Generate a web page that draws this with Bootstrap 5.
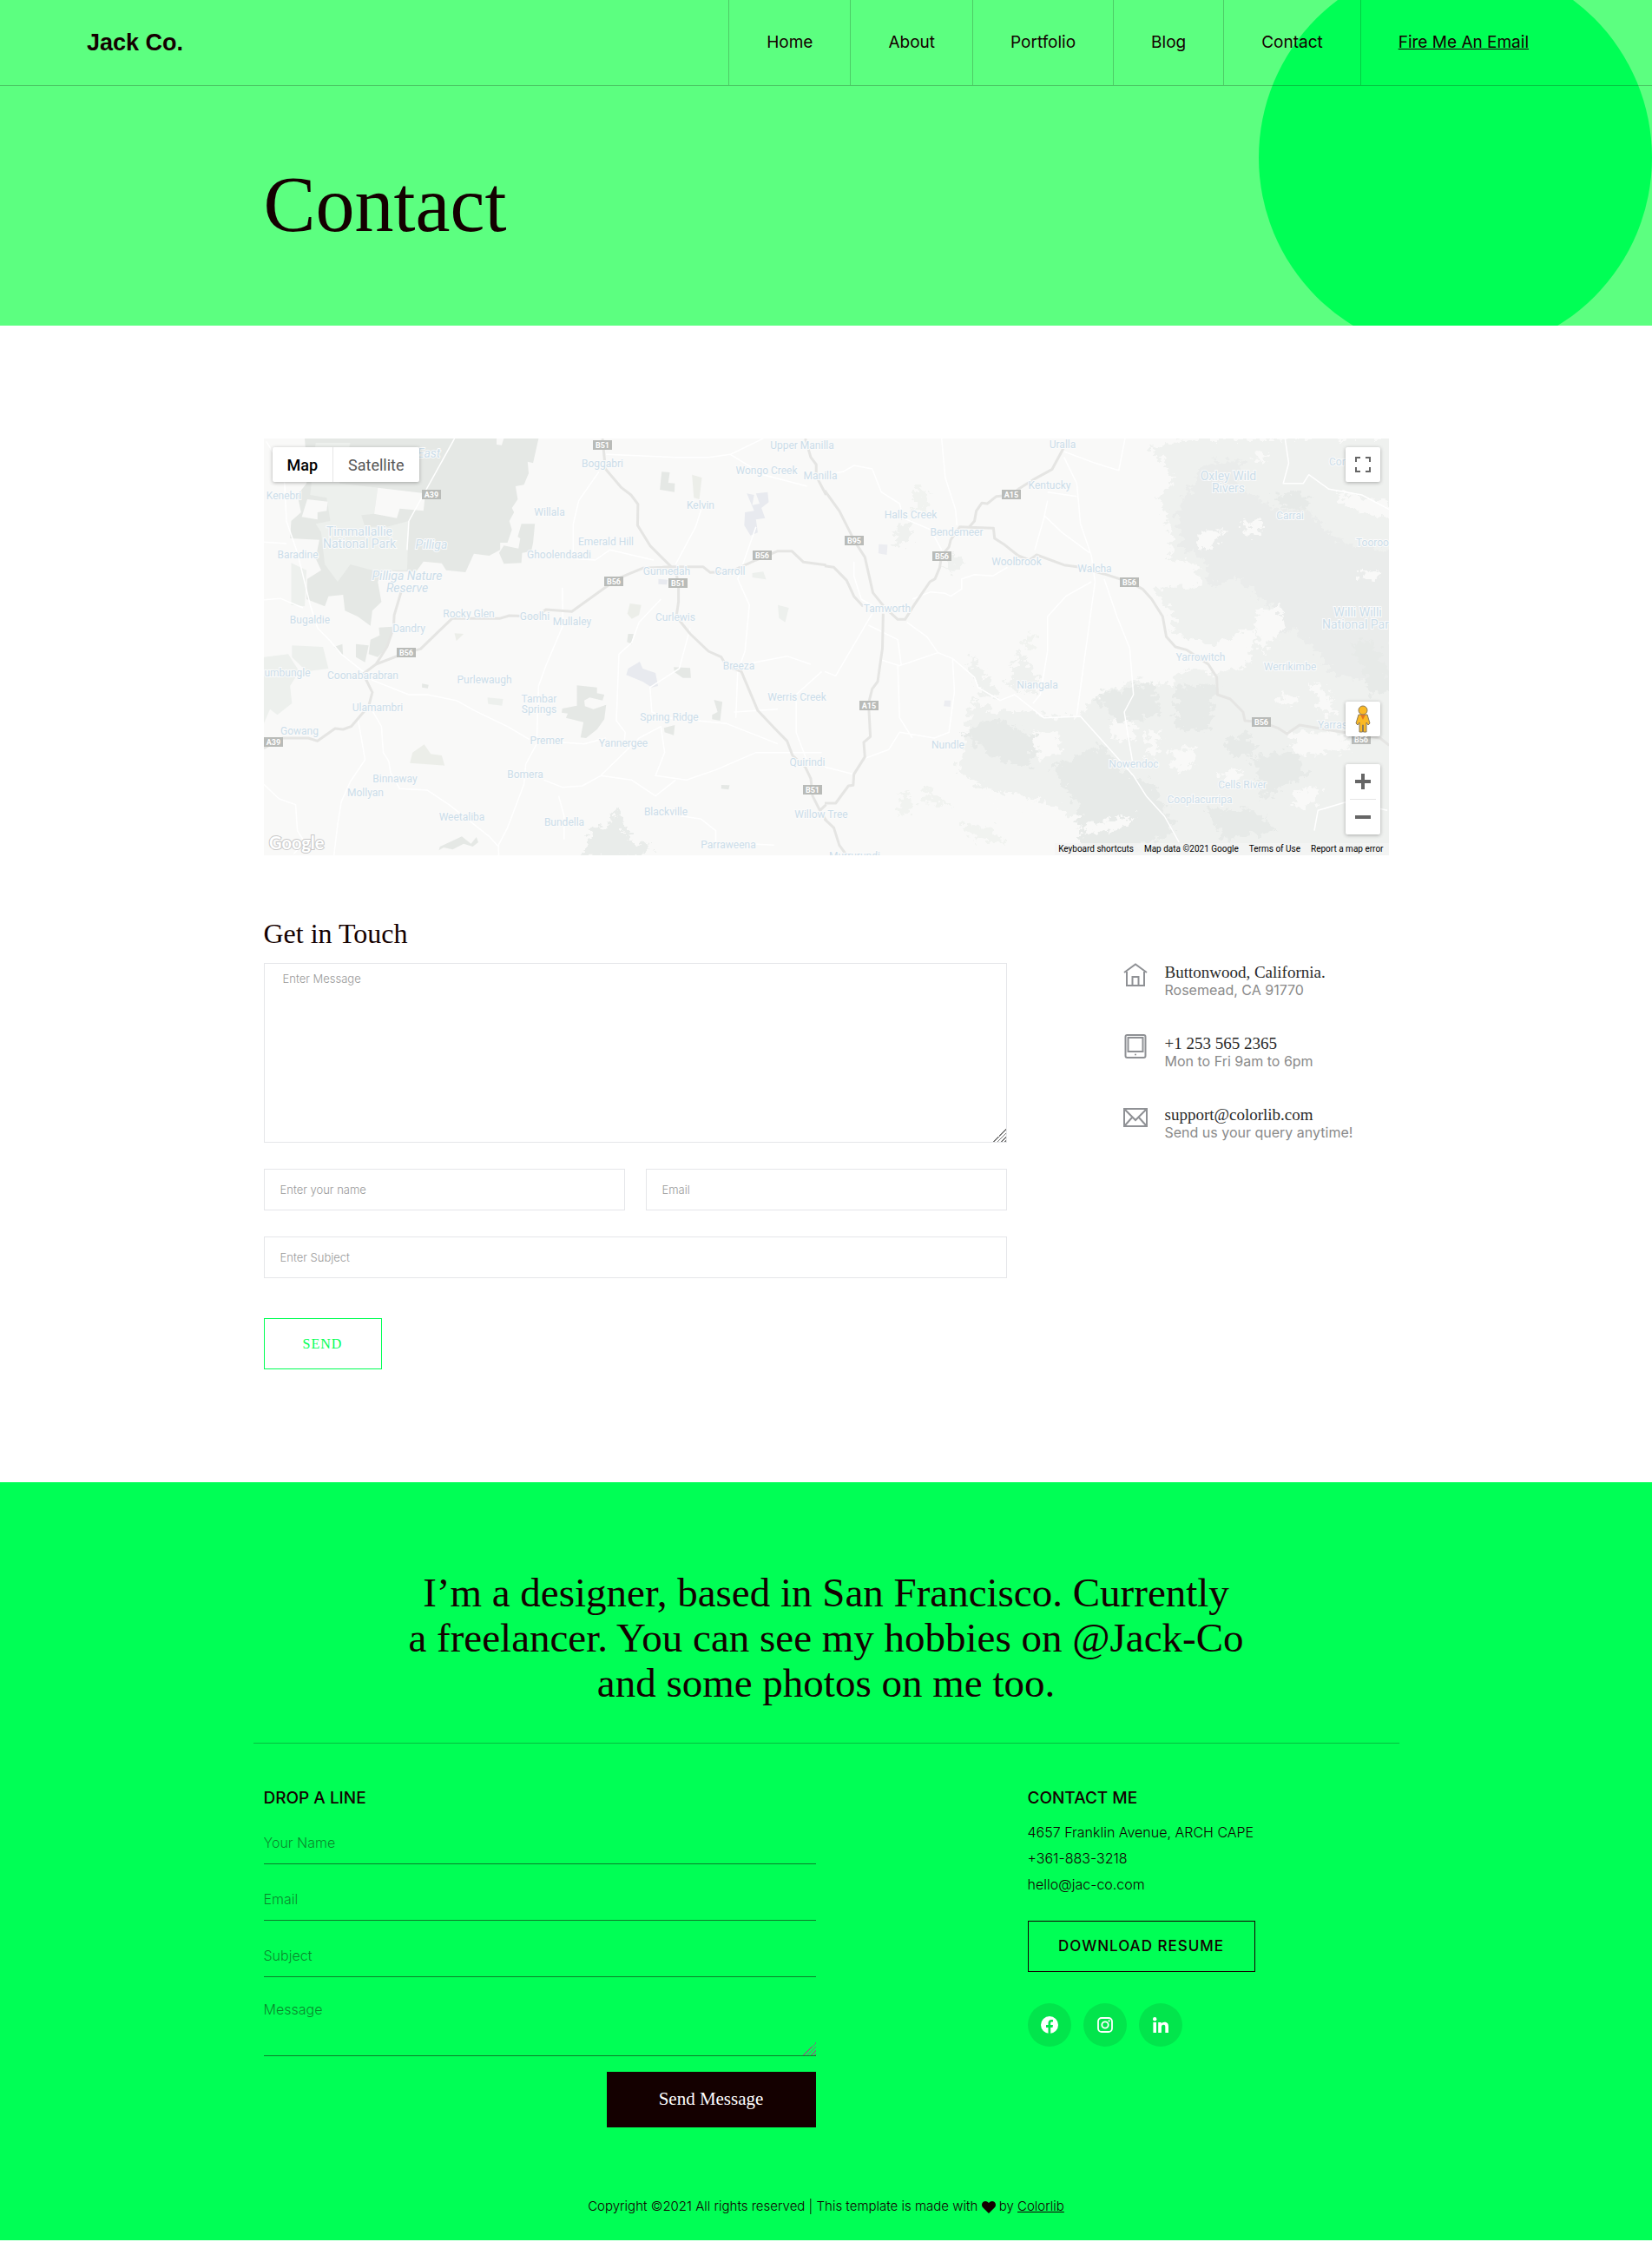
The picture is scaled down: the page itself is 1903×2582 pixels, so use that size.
<!DOCTYPE html>
<html lang="en">
<head>
<meta charset="utf-8">
<meta name="viewport" content="width=device-width, initial-scale=1">
<title>Contact | Jack Co.</title>
<link rel="stylesheet" href="https://cdn.jsdelivr.net/npm/bootstrap@5.3.0/dist/css/bootstrap.min.css">
<style>
  :root { --ink: #140000; --green: #00ff55; --green-soft: #5cff80; --serif: "Liberation Serif", serif; --sans: Inter, "Liberation Sans", sans-serif; }
  body { font-family: var(--sans); font-size: 16px; color: var(--ink); background: #fff; }
  a { color: var(--ink); }
  .hero { background: var(--green-soft); min-height: 375px; isolation: isolate; }
  .hero-disc { position: absolute; z-index: -1; top: -45px; right: 0; width: 453px; height: 453px; border-radius: 50%; background: var(--green); }
  .site-header { border-bottom: 1px solid rgba(20,0,0,.22); padding: 0 100px; }
  .site-header .brand { font-size: 27px; font-weight: 700; font-family: "Liberation Sans", sans-serif; line-height: 98px; }
  .site-nav a { display: block; padding: 0 43px; font-size: 19px; line-height: 98px; border-left: 1px solid rgba(20,0,0,.2); text-decoration: none; }
  .site-nav li:last-child a { padding-right: 0; text-decoration: underline; margin-right: 42px; }
  .hero h1 { font-family: var(--serif); font-size: 90px; line-height: 108px; padding-top: 83px; margin: 0; }
  .contact-section { padding: 130px 0; }

  .map-box { height: 480px; background: #f9f9f8; overflow: hidden; margin-bottom: 72px; font-family: Roboto, sans-serif; }
  .map-box > svg { width: 100%; height: 100%; display: block; }
  .map-roads path { fill: none; vector-effect: non-scaling-stroke; stroke-linejoin: round; }
  .road-main { stroke: #e5e5e3; stroke-width: 3; }
  .road-minor { stroke: #fff; stroke-width: 1.5; }
  .map-labels { font-family: Roboto, sans-serif; font-size: 12px; fill: #cbdde9; text-anchor: middle; }
  .map-labels text { paint-order: stroke; stroke: #fbfbfb; stroke-width: 2px; }
  .map-labels .park { font-size: 14px; }
  .map-labels .from { text-anchor: start; }
  .map-shields rect { fill: #b9bbb8; }
  .map-shields text { font: 700 9px Roboto, sans-serif; fill: #fff; text-anchor: middle; }
  .map-ctl { position: absolute; background: #fff; border-radius: 2px; box-shadow: 0 1px 4px rgba(0,0,0,.3); }
  .map-ctl button { border: 0; background: none; padding: 0; height: 40px; color: #565656; font-size: 18px; display: block; }
  .map-types { top: 10px; left: 10px; }
  .map-types button { padding: 0 17px; }
  .map-types button:first-child { color: #000; font-weight: 500; border-right: 1px solid #e6e6e6; }
  .map-side { right: 10px; width: 40px; }
  .map-side button { width: 40px; }
  .map-side svg { display: block; margin: auto; }
  .map-full { top: 10px; }
  .map-man { top: 303px; }
  .map-zoom { bottom: 24px; }
  .map-zoom hr { margin: 0 5px; border-color: #999; }
  .map-terms { position: absolute; right: 0; bottom: 0; background: rgba(245,245,245,.7); font-size: 10px; line-height: 14px; padding: 0 6px 0 4px; gap: 12px; }
  .map-terms, .map-terms a { color: #000; text-decoration: none; }

  .form-title { font-family: var(--serif); font-size: 32px; line-height: 36px; margin-bottom: 16px; }
  .message-form .form-control { border: 1px solid #e5e6e9; border-radius: 0; font-size: 13px; padding: 0 18px; height: 48px; font-weight: 300; }
  .message-form textarea.form-control { height: 207px; padding: 8px 21px; display: block; }
  .message-form .form-control::placeholder { color: #999; }
  .message-form .field-gap { margin-top: 30px; }
  textarea::-webkit-resizer { background: linear-gradient(135deg, transparent 50%, #777 50% 56%, transparent 56% 64%, #777 64% 70%, transparent 70% 78%, #777 78% 84%, transparent 84% 92%, #777 92%); }
  .btn-send { width: 136px; height: 59px; border: 1px solid var(--green); color: var(--green); font-family: var(--serif); font-size: 16px; border-radius: 0; letter-spacing: 1px; margin-top: 46px; }
  .info-item { gap: 20px; height: 82px; }
  .info-item svg { width: 28px; height: 28px; flex: none; fill: none; stroke: #8f9195; stroke-width: 2; }
  .info-item h3 { font-family: var(--serif); font-size: 19px; line-height: 21px; margin: 0; color: #2a2a2a; }
  .info-item p { font-size: 16px; line-height: 20px; margin: 0; color: #8a8a8a; }
  .info-item a { color: inherit; text-decoration: none; }

  .site-footer { background: var(--green); padding: 101px 0 27px; }
  .tagline { font-family: var(--serif); font-size: 47px; line-height: 52px; margin: 0 0 43px; }
  .footer-rule { border-top: 1px solid #140000; opacity: .25; margin: 0 -12px 51px; }
  .foot-title { font-size: 19px; font-weight: 500; line-height: 24px; margin: 0 0 12px; }
  .line-form { padding-top: 3px; }
  .line-form .form-control { border: 0; border-bottom: 1px solid rgba(20,0,0,.5); border-radius: 0; background: none; padding: 0; height: 49px; font-size: 16px; font-weight: 300; margin-bottom: 16px; }
  .line-form textarea.form-control { height: 75px; margin-bottom: 18px; padding-top: 9px; display: block; }
  .line-form .form-control::placeholder { color: rgba(20,0,0,.5); }
  .btn-dark-send { width: 241px; height: 64px; background: var(--ink); color: #fff; border-radius: 0; font-family: var(--serif); font-size: 21px; }
  .contact-lines { font-size: 16px; line-height: 30px; font-weight: 300; margin: 0 0 27px; }
  .contact-lines a { text-decoration: none; }
  .btn-resume { width: 262px; height: 59px; line-height: 57px; padding: 0; border: 1px solid var(--ink); border-radius: 0; font-size: 17px; font-weight: 500; letter-spacing: 1px; color: var(--ink); }
  .social { gap: 14px; margin-top: 36px; }
  .social a { width: 50px; height: 50px; border-radius: 50%; background: rgba(20,0,0,.1); }
  .copyright { font-size: 15px; font-weight: 300; line-height: 24px; margin: 79px 0 0; }
</style>
<script src="https://cdn.jsdelivr.net/npm/bootstrap@5.3.0/dist/js/bootstrap.bundle.min.js"></script>
</head>
<body>

<div class="hero position-relative overflow-hidden">
  <div class="hero-disc"></div>
  <header class="site-header d-flex justify-content-between">
    <a class="brand text-decoration-none" href="#">Jack Co.</a>
    <nav class="site-nav">
      <ul class="list-unstyled d-flex m-0">
        <li><a href="#">Home</a></li>
        <li><a href="#">About</a></li>
        <li><a href="#">Portfolio</a></li>
        <li><a href="#">Blog</a></li>
        <li><a href="#">Contact</a></li>
        <li><a href="#">Fire Me An Email</a></li>
      </ul>
    </nav>
  </header>
  <div class="container"><h1>Contact</h1></div>
</div>

<main class="contact-section">
  <div class="container">
    <div class="map-box position-relative">
      <svg viewBox="0 0 1296 480" preserveAspectRatio="xMidYMid slice" role="img" aria-label="Map of the region around Tamworth">
        <defs>
          <filter id="ragged" x="-5%" y="-5%" width="110%" height="110%">
            <feTurbulence type="fractalNoise" baseFrequency=".05" numOctaves="5" seed="8" result="n"/>
            <feDisplacementMap in="SourceGraphic" in2="n" scale="60" xChannelSelector="R" yChannelSelector="G"/>
          </filter>
        </defs>
        <!-- parks and ranges, west half -->
        <g transform="translate(-14 -15) scale(.42088 .33333)">
          <path fill="#e5e8e5" d="M145 45H785L770 130 755 125 758 165 745 205 722 210 728 255 712 285 718 300 705 330 712 360 700 405 680 405 680 430 650 450 608 443 585 507 532 500 520 476 470 470 450 505 400 505 360 500 345 540 355 610 330 640 325 692 290 660 255 640 250 585 210 590 200 625 150 600 152 530 190 500 175 460 185 395 105 390 108 330 135 300 125 240 150 200 150 130Z"/>
          <path fill="#edf0ed" d="M175 60H270L240 200 345 215 335 305 300 310 310 350 370 350 430 330 425 500 330 500 270 480 235 540 200 480 190 370 175 340 215 330 205 250 160 240Z"/>
          <path fill="#f9f9f8" d="M345 215L475 235 470 295 405 287 397 320 335 305ZM152 255L208 263 205 295 180 300 180 325 137 316ZM110 50L130 72 150 75 140 110 60 80 60 45ZM670 45H690L684 68 670 66Z"/>
          <path fill="#e5e8e5" d="M738 340L775 340 770 405 765 435 740 440 738 475 690 478 677 440 690 415 730 425 735 390 728 385ZM348 698L385 695 375 760 345 800 320 790 325 740 350 725ZM285 755L320 760 310 818 285 800ZM225 765L248 755 250 795ZM890 898L945 905 945 925 965 930 960 950 925 940 910 950 912 970 935 980 970 965 965 1015 945 1050 915 1080 900 1078 908 1025 860 1010 865 995 848 992 850 978 890 968ZM1265 948L1288 955 1282 1020 1260 1015 1260 1000 1275 990ZM1155 835L1200 838 1202 872 1180 872 1157 852ZM1128 1045L1158 1035 1155 1070 1130 1060ZM1122 160L1144 162 1140 198 1158 200 1157 230 1117 222ZM1030 720L1045 720 1040 755 1027 748ZM466 892L484 896 482 908 466 905ZM1285 1242L1308 1243 1305 1258 1285 1255ZM515 1455L575 1420 600 1445 615 1422 620 1440 605 1455 580 1445 550 1465 525 1458 512 1468Z"/>
          <path fill="#edf0ed" d="M33 800L100 790 130 850 105 900 110 960 70 1000 50 980 33 1030ZM110 760L195 765 210 840 150 850 110 800ZM108 475L150 500 145 625 108 620ZM645 940L688 945 685 968 647 962ZM1370 510L1400 505 1408 532 1370 525ZM1440 620L1470 630 1460 680 1443 665Z"/>
          <path fill="#eceee9" d="M472 1102L490 1135 520 1140 528 1175 433 1166 440 1130ZM1035 615L1066 620 1060 655 1040 668 1028 650ZM1205 170L1232 180 1225 255 1210 250ZM555 718L580 720 560 745Z"/>
          <path fill="#e8eaef" d="M1355 235L1375 240 1370 275 1390 270 1380 235 1412 230 1415 265 1395 285 1405 320 1380 325 1385 370 1365 380 1348 345 1350 300 1375 295ZM1030 840L1062 816 1070 840 1105 855 1112 900 1095 905 1070 885 1025 862ZM1113 530L1138 533 1136 550 1113 548Z"/>
          <path fill="#e9ecea" filter="url(#ragged)" d="M925 1400L980 1375 1000 1320 1020 1390 1040 1440 1100 1450 1060 1490 905 1490Z"/>
        </g>
        <!-- ranges, east half -->
        <g transform="translate(646 -15) scale(.42088 .33333)">
          <g filter="url(#ragged)">
            <path fill="#eff1ef" d="M890 80L1000 45H1580V1500H700L720 1380 640 1320 560 1290 480 1300 440 1250 360 1200 390 1060 400 940 460 990 560 990 640 1010 700 1000 760 920 850 880 930 900 1000 840 1080 860 1160 830 1180 700 1130 720 1060 760 960 720 950 640 900 560 1030 560 1010 470 940 470 950 380 920 250 960 180Z"/>
            <path fill="#eaeceb" d="M1040 130L1140 120 1130 200 1240 300 1320 290 1400 400 1560 430V900L1400 860 1280 700 1200 760 1240 640 1120 520 1060 560 1040 460 980 430 960 300Z"/>
            <path fill="#e7eae8" d="M380 1060L470 1010 580 1080 560 1180 460 1150ZM740 930L900 890 920 1000 800 1030ZM960 900L1070 890 1050 1060 960 1040ZM620 1180L760 1100 820 1200 900 1240 960 1400 820 1480 700 1460 690 1300ZM1170 1150L1290 1120 1320 1200 1200 1290ZM1230 240L1310 230 1330 290 1260 290ZM1440 750L1500 740 1560 900 1500 940ZM1100 1080L1160 1060 1180 1140 1110 1140ZM1040 1330L1160 1320 1240 1400 1100 1430Z"/>
            <path fill="#eff1ef" d="M400 780L440 860 480 930 440 940 400 860ZM530 780L580 860 580 930 500 900ZM200 350L240 330 230 400 190 430ZM345 440L380 470 350 510 330 490Z"/>
            <path fill="#f9f9f8" d="M1180 640L1240 620 1260 700 1190 790ZM1020 370L1090 360 1060 430 1020 420ZM1180 90L1220 100 1200 130 1180 120ZM1140 340L1200 330 1190 370 1160 380ZM570 1060L640 1060 650 1130 580 1150ZM440 1260L540 1270 600 1340 480 1330ZM880 1060L920 1050 910 1150 880 1140ZM940 1120L1010 1120 1010 1190 960 1190ZM1260 1060L1420 1060 1440 1120 1300 1140ZM1330 880L1380 920 1400 1010 1360 990ZM1400 230L1540 260 1580 330 1440 290ZM1280 1260L1360 1250 1340 1310 1290 1320ZM780 1020L860 1030 840 1090 790 1080ZM700 1380L850 1350 820 1390 720 1410ZM1080 1200L1140 1190 1130 1230 1090 1230ZM1240 930L1300 940 1280 970 1240 960ZM1460 500L1520 510 1500 540 1470 530Z"/>
            <path fill="#f1f3f0" d="M245 200L280 230 285 300 245 290ZM545 730L570 720 565 770 545 760ZM205 1290L230 1260 240 1330 205 1350ZM265 1240L330 1300 360 1320 280 1300ZM380 1370L460 1390 490 1440 440 1440 380 1400Z"/>
          </g>
          <path fill="#ecedf1" d="M148 410L172 412 170 447 147 442ZM328 950L345 950 344 972 326 970Z"/>
        </g>
        <g class="map-roads" transform="translate(-14 -15) scale(.42088 .33333)">
          <path class="road-minor" d="M40 55L75 130 90 200 95 330 125 440 160 620 180 700 215 745 245 790 305 850 330 880 430 930 480 930 560 950 610 985 650 1010 700 1040 760 1085M33 403L95 408M33 602L80 598 140 630M850 560L852 690 805 830 785 900 780 1100 750 1170 745 1240 700 1390 675 1450 676 1485M330 985L355 1040 360 1130 375 1160 380 1200 405 1255 480 1260 540 1310 600 1370 650 1420 675 1455M290 1010L300 1080 310 1155 270 1230 245 1300 235 1380 225 1485M1380 350L1330 530 1362 620 1350 780 1330 850 1325 1010M950 160L895 260 880 340 880 460 940 465 980 430 1100 465M970 100L1160 110 1250 110 1310 100 1400 45M1230 290L1215 350 1160 480M1120 600L1060 680 1040 750 1005 790 998 1020 1022 1060 1020 1090M1200 700L1170 840 1090 905 1095 990 1140 1010 1300 1030 1440 1100M1310 100L1400 170 1520 210M1560 850L1490 930 1490 1060 1520 1160M1560 1130L1380 1130 1270 1190 1190 1225 1105 1210 1130 1130 1120 1040 1060 1080 955 1210 905 1245 850 1250 800 1225M955 1210L1040 1225 1105 1280 1160 1225M840 1280L855 1350 855 1430M33 1240L75 1290 120 1310 125 1400 145 1440 115 1480M430 330L555 45M425 430L430 330M850 1095L910 1100 970 1080M1330 830L1465 797 1530 825M1320 990L1440 980M1130 1340L1230 1360 1270 1400 1270 1440 1430 1450"/>
          <path class="road-main" d="M960 45L968 150 1012 215 1038 240 1057 272 1056 345 1090 415 1148 488 1190 488 1235 488 1255 508 1310 505 1380 465 1440 434 1478 434 1510 472 1572 482M1148 488L1070 493 1000 530 876 643 805 636 780 660 705 657 678 667 598 667 548 667 462 772 423 785 340 825 305 858 330 922 320 970 272 1040 250 1050 228 1047 180 1090 155 1080 85 1080 33 1115M410 570L390 655 388 700 370 765 340 825M1160 490L1168 560 1168 610 1162 660 1200 720 1250 780 1285 800 1300 832 1340 850 1385 985 1430 1045 1465 1090 1480 1140 1515 1180 1530 1220 1535 1280 1555 1330 1572 1310M1515 45L1530 110 1545 135 1545 175 1572 240M1555 1330L1572 1365"/>
        </g>
        <g class="map-roads" transform="translate(646 -15) scale(.42088 .33333)">
          <path class="road-minor" d="M0 170L50 160 80 138 130 150 155 230 205 270 215 320 290 360 320 430M320 45L330 180 358 290 362 345M655 110L690 200 700 340 730 450 740 540 690 1000M610 260L600 320 575 430M600 310L650 370 725 440M655 90L740 130 805 155 822 45M730 540L660 590 610 660 610 780 590 930 570 960M765 530L800 660 835 770 845 930 820 990 830 1070 845 1180M240 600L290 575 330 580 345 590 375 565 375 530 410 515 460 520 500 490M225 680L280 730 310 785 350 805 410 870 420 905 480 950 520 930 600 1010 700 1005 760 1090 845 1210 880 1280 930 1350 970 1440M200 830L205 1010 240 1080M155 810L205 830 310 785M350 805L355 920 340 1060 300 1080 205 1060 175 1120 110 1150M130 650L30 865 0 850M120 690L200 740 210 830M80 470L80 520 100 600 155 640M1260 45L1270 130 1255 200 1310 200 1325 170 1380 220 1470 240 1545 290M1340 1400L1350 1330 1430 1300 1540 1330M610 230L690 245M0 1180L80 1205"/>
          <path class="road-main" d="M655 75L622 152 570 188 530 220 512 240 470 245 445 270 430 268 415 295 410 330 395 352 370 350 345 395 340 420 320 450 315 490 302 530 288 540 245 620 220 670 200 670 165 630 132 578 110 455 82 400 40 295 0 225M0 485L25 490 60 535 80 590 105 625M160 650L158 770 145 885 130 910 120 960 125 1075 107 1095 110 1145 80 1205 78 1243 65 1245 30 1305 0 1305M0 1360L25 1390 40 1450 60 1485M395 352L462 355 465 390 490 410 530 450 560 465 580 447 655 482 700 490 770 515 834 541 870 565 895 600 925 660 935 730 960 765 990 775 1050 825 1073 870 1075 930 1110 945 1145 990 1150 1020 1196 1025 1240 1045 1265 1065 1300 1035 1370 1050 1520 1080 1545 1105"/>
        </g>
        <g class="map-labels">
          <text class="park" font-style="italic" x="190" y="22">East</text><text x="390" y="33">Boggabri</text><text x="620" y="12">Upper Manilla</text><text x="579" y="41">Wongo Creek</text><text x="641" y="47">Manilla</text><text x="23" y="70">Kenebri</text><text x="503" y="81">Kelvin</text><text x="329" y="89">Willala</text>
          <text class="park" x="110" y="112">Timmallallie</text><text class="park" x="110" y="126">National Park</text><text class="park" font-style="italic" x="193" y="127">Pilliga</text><text x="39" y="138">Baradine</text><text x="394" y="123">Emerald Hill</text><text x="340" y="138">Ghoolendaadi</text>
          <text class="park" font-style="italic" x="165" y="163">Pilliga Nature</text><text class="park" font-style="italic" x="165" y="177">Reserve</text><text x="464" y="157">Gunnedah</text><text x="537" y="157">Carroll</text><text x="236" y="206">Rocky Glen</text><text x="312" y="209">Goolhi</text><text x="355" y="215">Mullaley</text><text x="474" y="210">Curlewis</text><text x="53" y="213">Bugaldie</text><text x="167" y="223">Dandry</text>
          <text x="547" y="266">Breeza</text><text x="27" y="274">umbungle</text><text x="114" y="277">Coonabarabran</text><text x="254" y="282">Purlewaugh</text><text x="317" y="304">Tambar</text><text x="317" y="316">Springs</text><text x="614" y="302">Werris Creek</text><text x="131" y="314">Ulamambri</text><text x="467" y="325">Spring Ridge</text><text x="41" y="341">Gowang</text><text x="326" y="352">Premer</text><text x="414" y="355">Yannergee</text><text x="626" y="377">Quirindi</text>
          <text x="301" y="391">Bomera</text><text x="151" y="396">Binnaway</text><text x="117" y="412">Mollyan</text><text x="463" y="434">Blackville</text><text x="642" y="437">Willow Tree</text><text x="228" y="440">Weetaliba</text><text x="346" y="446">Bundella</text><text x="535" y="472">Parraweena</text>
          <text x="920" y="11">Uralla</text><text x="905" y="58">Kentucky</text><text class="park" x="1111" y="48">Oxley Wild</text><text class="park" x="1111" y="62">Rivers</text><text class="from" x="1227" y="31">Cor</text><text x="745" y="92">Halls Creek</text><text x="1182" y="93">Carrai</text><text x="798" y="112">Bendemeer</text><text class="from" x="1258" y="124">Tooroo</text><text x="867" y="146">Woolbrook</text><text x="957" y="154">Walcha</text><text x="718" y="200">Tamworth</text>
          <text class="park" x="1260" y="205">Willi Willi</text><text class="park from" x="1219" y="219">National Par</text><text x="1079" y="256">Yarrowitch</text><text x="1182" y="267">Werrikimbe</text><text x="891" y="288">Niangala</text><text x="788" y="357">Nundle</text><text class="from" x="1214" y="334">Yarras</text><text x="1002" y="379">Nowendoc</text><text x="1127" y="403">Cells River</text><text x="1078" y="420">Cooplacurripa</text><text class="from" x="651" y="485">Murrurundi</text>
        </g>
        <g class="map-shields">
          <g><rect x="379" y="2" width="22" height="11"/><text x="390" y="11">B51</text></g>
          <g><rect x="182" y="59" width="22" height="11"/><text x="193" y="68">A39</text></g>
          <g><rect x="563" y="129" width="22" height="11"/><text x="574" y="138">B56</text></g>
          <g><rect x="392" y="159" width="22" height="11"/><text x="403" y="168">B56</text></g>
          <g><rect x="466" y="161" width="22" height="11"/><text x="477" y="170">B51</text></g>
          <g><rect x="153" y="241" width="22" height="11"/><text x="164" y="250">B56</text></g>
          <g><rect x="0" y="344" width="22" height="11"/><text x="11" y="353">A39</text></g>
          <g><rect x="621" y="399" width="22" height="11"/><text x="632" y="408">B51</text></g>
          <g><rect x="850" y="59" width="22" height="11"/><text x="861" y="68">A15</text></g>
          <g><rect x="669" y="112" width="22" height="11"/><text x="680" y="121">B95</text></g>
          <g><rect x="770" y="130" width="22" height="11"/><text x="781" y="139">B56</text></g>
          <g><rect x="986" y="160" width="22" height="11"/><text x="997" y="169">B56</text></g>
          <g><rect x="686" y="302" width="22" height="11"/><text x="697" y="311">A15</text></g>
          <g><rect x="1138" y="321" width="22" height="11"/><text x="1149" y="330">B56</text></g>
          <g><rect x="1253" y="341" width="22" height="11"/><text x="1264" y="350">B56</text></g>
        </g>
        <text x="6" y="473" font-family="Lato, sans-serif" font-size="20" font-weight="700" fill="#fff" stroke="#c8c8c8" stroke-width="2" paint-order="stroke">Google</text>
      </svg>
      <div class="map-ctl map-types d-flex"><button type="button">Map</button><button type="button">Satellite</button></div>
      <div class="map-ctl map-side map-full"><button type="button" aria-label="Full screen"><svg width="18" height="18" viewBox="0 0 18 18" fill="#666"><path d="M0 0v6h2V2h4V0H0zm16 0h-4v2h4v4h2V0h-2zm0 16h-4v2h6v-6h-2v4zM2 12H0v6h6v-2H2v-4z"/></svg></button></div>
      <div class="map-ctl map-side map-man"><button type="button" aria-label="Street view"><svg width="18" height="32" viewBox="0 0 18 32"><path d="M4 11h10l3 10-2 2-2-3v11H9.500V23h-1v8H5V20l-2 3-2-2z" fill="#fbb924" stroke="#8b7a5a"/><path d="M6 11h6l-3 6z" fill="#e5741f"/><circle cx="9" cy="6" r="5" fill="#fbb924" stroke="#8b7a5a"/></svg></button></div>
      <div class="map-ctl map-side map-zoom"><button type="button" aria-label="Zoom in"><svg width="18" height="18" viewBox="0 0 18 18" fill="#666"><path d="M18 7h-7V0H7v7H0v4h7v7h4v-7h7z"/></svg></button><hr><button type="button" aria-label="Zoom out"><svg width="18" height="18" viewBox="0 0 18 18" fill="#666"><path d="M0 7h18v4H0z"/></svg></button></div>
      <div class="map-terms d-flex"><a href="#">Keyboard shortcuts</a><span>Map data ©2021 Google</span><a href="#">Terms of Use</a><a href="#">Report a map error</a></div>
    </div>

    <h2 class="form-title">Get in Touch</h2>
    <div class="row">
      <div class="col-lg-8">
        <form class="message-form">
          <label class="visually-hidden" for="message">Message</label>
          <textarea class="form-control" id="message" placeholder="Enter Message"></textarea>
          <div class="row">
            <div class="col-sm-6"><label class="visually-hidden" for="name">Name</label><input class="form-control field-gap" id="name" type="text" placeholder="Enter your name"></div>
            <div class="col-sm-6"><label class="visually-hidden" for="email">Email</label><input class="form-control field-gap" id="email" type="email" placeholder="Email"></div>
          </div>
          <label class="visually-hidden" for="subject">Subject</label><input class="form-control field-gap" id="subject" type="text" placeholder="Enter Subject">
          <button class="btn btn-send" type="button">SEND</button>
        </form>
      </div>
      <div class="col-lg-3 offset-lg-1">
        <div class="info-item d-flex">
          <svg viewBox="0 0 28 28"><path d="M1 11L14 1.500 27 11M4 10v16h20V10M10.500 26V16h7v10"/></svg>
          <div><h3>Buttonwood, California.</h3><p>Rosemead, CA 91770</p></div>
        </div>
        <div class="info-item d-flex">
          <svg viewBox="0 0 28 28"><rect x="2.500" y="1" width="23" height="26" rx="2"/><rect x="5.500" y="4" width="17" height="16"/><circle cx="14" cy="23.500" r="1" fill="#8f9195" stroke="none"/></svg>
          <div><h3>+1 253 565 2365</h3><p>Mon to Fri 9am to 6pm</p></div>
        </div>
        <div class="info-item d-flex">
          <svg viewBox="0 0 28 28"><path d="M1 4h26v20H1zM1 4l13 13L27 4M1 24l9.500-10.500M27 24l-9.500-10.500"/></svg>
          <div><h3><a href="#">support@colorlib.com</a></h3><p>Send us your query anytime!</p></div>
        </div>
      </div>
    </div>
  </div>
</main>

<footer class="site-footer">
  <div class="container">
    <p class="tagline text-center">I’m a designer, based in San Francisco. Currently<br>a freelancer. You can see my hobbies on @Jack-Co<br>and some photos on me too.</p>
    <hr class="footer-rule">
    <div class="row">
      <div class="col-lg-6">
        <h3 class="foot-title">DROP A LINE</h3>
        <form class="line-form">
          <label class="visually-hidden" for="f-name">Your Name</label><input class="form-control" id="f-name" type="text" placeholder="Your Name">
          <label class="visually-hidden" for="f-email">Email</label><input class="form-control" id="f-email" type="email" placeholder="Email">
          <label class="visually-hidden" for="f-subject">Subject</label><input class="form-control" id="f-subject" type="text" placeholder="Subject">
          <label class="visually-hidden" for="f-message">Message</label><textarea class="form-control" id="f-message" placeholder="Message"></textarea>
          <div class="text-end"><button class="btn btn-dark-send" type="button">Send Message</button></div>
        </form>
      </div>
      <div class="col-lg-4 offset-lg-2">
        <h3 class="foot-title">CONTACT ME</h3>
        <p class="contact-lines">4657 Franklin Avenue, ARCH CAPE<br>+361-883-3218<br><a href="#">hello@jac-co.com</a></p>
        <a class="btn btn-resume" href="#">DOWNLOAD RESUME</a>
        <div class="social d-flex">
          <a class="d-flex align-items-center justify-content-center" href="#" aria-label="Facebook"><svg width="20" height="20" viewBox="0 0 20 20"><circle cx="10" cy="10" r="10" fill="#fff"/><path d="M8.500 20v-7H6v-3h2.500V7.800C8.500 5.300 10 4 12.200 4c1 0 1.800.2 1.800.2v2.400h-1.200c-1.200 0-1.600.7-1.600 1.500V10H14l-.5 3h-2.300v7z" fill="#02e64d"/></svg></a>
          <a class="d-flex align-items-center justify-content-center" href="#" aria-label="Instagram"><svg width="18" height="18" viewBox="0 0 18 18" fill="none" stroke="#fff" stroke-width="1.800"><rect x="1" y="1" width="16" height="16" rx="4"/><circle cx="9" cy="9" r="3.700"/><circle cx="13.600" cy="4.400" r="1.100" fill="#fff" stroke="none"/></svg></a>
          <a class="d-flex align-items-center justify-content-center" href="#" aria-label="LinkedIn"><svg width="18" height="18" viewBox="0 0 18 18" fill="#fff"><circle cx="2.200" cy="2.200" r="2.200"/><path d="M.4 6H4v12H.4zM6.200 6h3.500v1.600c.6-1 1.800-1.900 3.700-1.900 3.700 0 4.600 2.300 4.600 5.500V18h-3.700v-6c0-1.500 0-3.200-2-3.200S9.900 10.300 9.900 12v6H6.200z"/></svg></a>
        </div>
      </div>
    </div>
    <p class="copyright text-center">Copyright ©2021 All rights reserved | This template is made with <svg width="16" height="14" viewBox="0 0 16 14" fill="#140000"><path d="M8 14L1.200 7.300C-.6 5.400-.3 2.200 1.700.8 3.600-.6 6.200-.1 8 2c1.800-2.100 4.400-2.600 6.300-1.200 2 1.400 2.300 4.600.5 6.500z"/></svg> by <a href="#">Colorlib</a></p>
  </div>
</footer>
</body>
</html>
